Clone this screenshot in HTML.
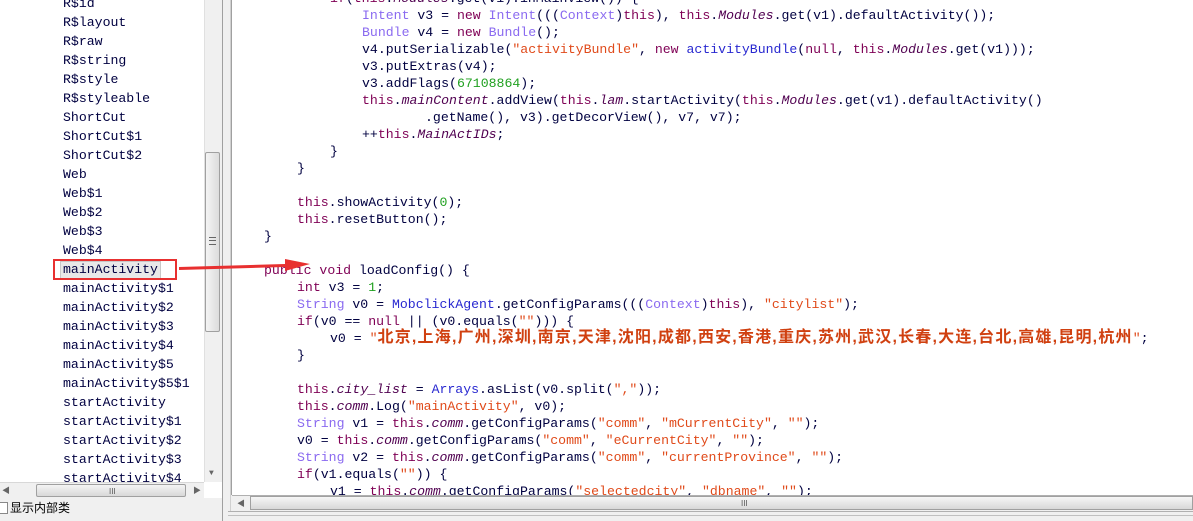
<!DOCTYPE html>
<html><head><meta charset="utf-8"><style>
body{margin:0;width:1193px;height:521px;background:#f0f0f0;overflow:hidden;position:relative;font-family:"Liberation Mono","Noto Sans CJK SC",monospace;}
.left{position:absolute;left:0;top:0;width:222px;height:498px;background:#fff;}
.tree div{position:absolute;left:63px;font-size:13.2px;color:#000040;height:19px;line-height:19px;white-space:pre;}
.vs{position:absolute;left:204px;top:0;width:17px;height:482px;background:#f0f0f0;border-left:1px solid #e0e0e0;}
.thumb{position:absolute;left:205px;top:152px;width:15px;height:180px;background:linear-gradient(90deg,#f4f4f4,#dcdcdc);border:1px solid #a0a0a0;border-radius:2px;box-sizing:border-box;}
.hs{position:absolute;left:0;top:482px;width:204px;height:16px;background:#f0f0f0;border-top:1px solid #d8d8d8;}
.hthumb{position:absolute;left:36px;top:484px;width:150px;height:13px;background:linear-gradient(#f4f4f4,#d8d8d8);border:1px solid #a0a0a0;border-radius:2px;box-sizing:border-box;}
.code{position:absolute;left:231px;top:0;width:962px;height:495px;background:#fff;border-left:1px solid #a0a0a0;}
.c div{position:absolute;font-size:13.2px;color:#000040;white-space:pre;height:17px;line-height:17px;}
.k{color:#7f0055}.t{color:#8a6af0}.s{color:#e04a1a}.n{color:#20a020}.b{color:#2828d0}.i{color:#500050;font-style:italic}
.cn{color:#d04010;font-weight:bold;font-size:16px;letter-spacing:1.2px;font-family:"Liberation Sans","Noto Sans CJK SC",sans-serif;}
.chs{position:absolute;left:232px;top:495px;width:961px;height:16px;background:#f0f0f0;border-top:1px solid #b0b0b0;}
.chthumb{position:absolute;left:250px;top:496px;width:943px;height:14px;background:linear-gradient(#f6f6f6,#d8d8d8);border:1px solid #a0a0a0;box-sizing:border-box;}
</style></head><body>
<div class="left"></div>
<div class="tree">
<div style="top:-6px">R$id</div>
<div style="top:13px">R$layout</div>
<div style="top:32px">R$raw</div>
<div style="top:51px">R$string</div>
<div style="top:70px">R$style</div>
<div style="top:89px">R$styleable</div>
<div style="top:108px">ShortCut</div>
<div style="top:127px">ShortCut$1</div>
<div style="top:146px">ShortCut$2</div>
<div style="top:165px">Web</div>
<div style="top:184px">Web$1</div>
<div style="top:203px">Web$2</div>
<div style="top:222px">Web$3</div>
<div style="top:241px">Web$4</div>
<div style="background:#e8e8e8;border:1px solid #c8c8c8;padding:0 2px;left:60px;height:16px;line-height:16px;top:261px">mainActivity</div>
<div style="top:279px">mainActivity$1</div>
<div style="top:298px">mainActivity$2</div>
<div style="top:317px">mainActivity$3</div>
<div style="top:336px">mainActivity$4</div>
<div style="top:355px">mainActivity$5</div>
<div style="top:374px">mainActivity$5$1</div>
<div style="top:393px">startActivity</div>
<div style="top:412px">startActivity$1</div>
<div style="top:431px">startActivity$2</div>
<div style="top:450px">startActivity$3</div>
<div style="top:469px">startActivity$4</div>
</div>
<div class="vs"></div>
<div class="thumb"><div style="position:absolute;left:3px;top:84px;width:7px;height:6px;border-top:1px solid #666;border-bottom:1px solid #666"><div style="margin-top:2px;border-top:1px solid #666"></div></div></div>
<div style="position:absolute;left:209px;top:469px;font-size:8px;color:#666">▼</div>
<div class="hs"></div>
<div style="position:absolute;left:2px;top:485px;font-size:8px;color:#666">◀</div>
<div style="position:absolute;left:193px;top:485px;font-size:8px;color:#666">▶</div>
<div class="hthumb"><div style="position:absolute;left:72px;top:2px;font-size:8px;color:#555;font-family:'Liberation Sans'">III</div></div>
<div style="position:absolute;left:-4px;top:502px;width:10px;height:10px;border:1px solid #888;background:#fff"></div>
<div style="position:absolute;left:10px;top:499px;font-size:12px;font-family:'Liberation Sans','Noto Sans CJK SC',sans-serif;color:#000">显示内部类</div>
<div style="position:absolute;left:222px;top:0;width:9px;height:521px;background:#f0f0f0;border-left:1px solid #a0a0a0;border-right:1px solid #d0d0d0;box-sizing:border-box"></div>
<div class="code"></div>
<div class="c">
<div style="top:-10px;left:330px"><span class="k">if</span>(<span class="k">this</span>.<span class="i">Modules</span>.get(v1).inMainView()) {</div>
<div style="top:7px;left:362px"><span class="t">Intent</span> v3 = <span class="k">new</span> <span class="t">Intent</span>(((<span class="t">Context</span>)<span class="k">this</span>), <span class="k">this</span>.<span class="i">Modules</span>.get(v1).defaultActivity());</div>
<div style="top:24px;left:362px"><span class="t">Bundle</span> v4 = <span class="k">new</span> <span class="t">Bundle</span>();</div>
<div style="top:41px;left:362px">v4.putSerializable(<span class="s">"activityBundle"</span>, <span class="k">new</span> <span class="b">activityBundle</span>(<span class="k">null</span>, <span class="k">this</span>.<span class="i">Modules</span>.get(v1)));</div>
<div style="top:58px;left:362px">v3.putExtras(v4);</div>
<div style="top:75px;left:362px">v3.addFlags(<span class="n">67108864</span>);</div>
<div style="top:92px;left:362px"><span class="k">this</span>.<span class="i">mainContent</span>.addView(<span class="k">this</span>.<span class="i">lam</span>.startActivity(<span class="k">this</span>.<span class="i">Modules</span>.get(v1).defaultActivity()</div>
<div style="top:109px;left:425px">.getName(), v3).getDecorView(), v7, v7);</div>
<div style="top:126px;left:362px">++<span class="k">this</span>.<span class="i">MainActIDs</span>;</div>
<div style="top:143px;left:330px">}</div>
<div style="top:160px;left:297px">}</div>
<div style="top:194px;left:297px"><span class="k">this</span>.showActivity(<span class="n">0</span>);</div>
<div style="top:211px;left:297px"><span class="k">this</span>.resetButton();</div>
<div style="top:228px;left:264px">}</div>
<div style="top:262px;left:264px"><span class="k">public</span> <span class="k">void</span> loadConfig() {</div>
<div style="top:279px;left:297px"><span class="k">int</span> v3 = <span class="n">1</span>;</div>
<div style="top:296px;left:297px"><span class="t">String</span> v0 = <span class="b">MobclickAgent</span>.getConfigParams(((<span class="t">Context</span>)<span class="k">this</span>), <span class="s">"citylist"</span>);</div>
<div style="top:313px;left:297px"><span class="k">if</span>(v0 == <span class="k">null</span> || (v0.equals(<span class="s">""</span>))) {</div>
<div style="top:329px;left:330px">v0 = <span class="s">"</span><span class="cn">北京,上海,广州,深圳,南京,天津,沈阳,成都,西安,香港,重庆,苏州,武汉,长春,大连,台北,高雄,昆明,杭州</span><span class="s">"</span>;</div>
<div style="top:347px;left:297px">}</div>
<div style="top:381px;left:297px"><span class="k">this</span>.<span class="i">city_list</span> = <span class="b">Arrays</span>.asList(v0.split(<span class="s">","</span>));</div>
<div style="top:398px;left:297px"><span class="k">this</span>.<span class="i">comm</span>.Log(<span class="s">"mainActivity"</span>, v0);</div>
<div style="top:415px;left:297px"><span class="t">String</span> v1 = <span class="k">this</span>.<span class="i">comm</span>.getConfigParams(<span class="s">"comm"</span>, <span class="s">"mCurrentCity"</span>, <span class="s">""</span>);</div>
<div style="top:432px;left:297px">v0 = <span class="k">this</span>.<span class="i">comm</span>.getConfigParams(<span class="s">"comm"</span>, <span class="s">"eCurrentCity"</span>, <span class="s">""</span>);</div>
<div style="top:449px;left:297px"><span class="t">String</span> v2 = <span class="k">this</span>.<span class="i">comm</span>.getConfigParams(<span class="s">"comm"</span>, <span class="s">"currentProvince"</span>, <span class="s">""</span>);</div>
<div style="top:466px;left:297px"><span class="k">if</span>(v1.equals(<span class="s">""</span>)) {</div>
<div style="top:483px;left:330px">v1 = <span class="k">this</span>.<span class="i">comm</span>.getConfigParams(<span class="s">"selectedcity"</span>, <span class="s">"dbname"</span>, <span class="s">""</span>);</div>
</div>
<div class="chs"></div>
<div style="position:absolute;left:237px;top:498px;font-size:8px;color:#666">◀</div>
<div class="chthumb"><div style="position:absolute;left:490px;top:2px;font-size:8px;color:#555;font-family:'Liberation Sans'">III</div></div>
<div style="position:absolute;left:228px;top:511px;width:965px;height:10px;background:#f0f0f0;border-top:1px solid #b0b0b0;box-sizing:border-box"><div style="margin-top:3px;border-top:1px solid #c0c0c0"></div></div>
<div style="position:absolute;left:53px;top:259px;width:124px;height:21px;border:2px solid #e83030;box-sizing:border-box"></div>
<svg style="position:absolute;left:0;top:0" width="1193" height="521"><polygon points="179,267 285,264 285,259 310,264 285,271 285,267 179,270" fill="#e83030"/></svg>
</body></html>
